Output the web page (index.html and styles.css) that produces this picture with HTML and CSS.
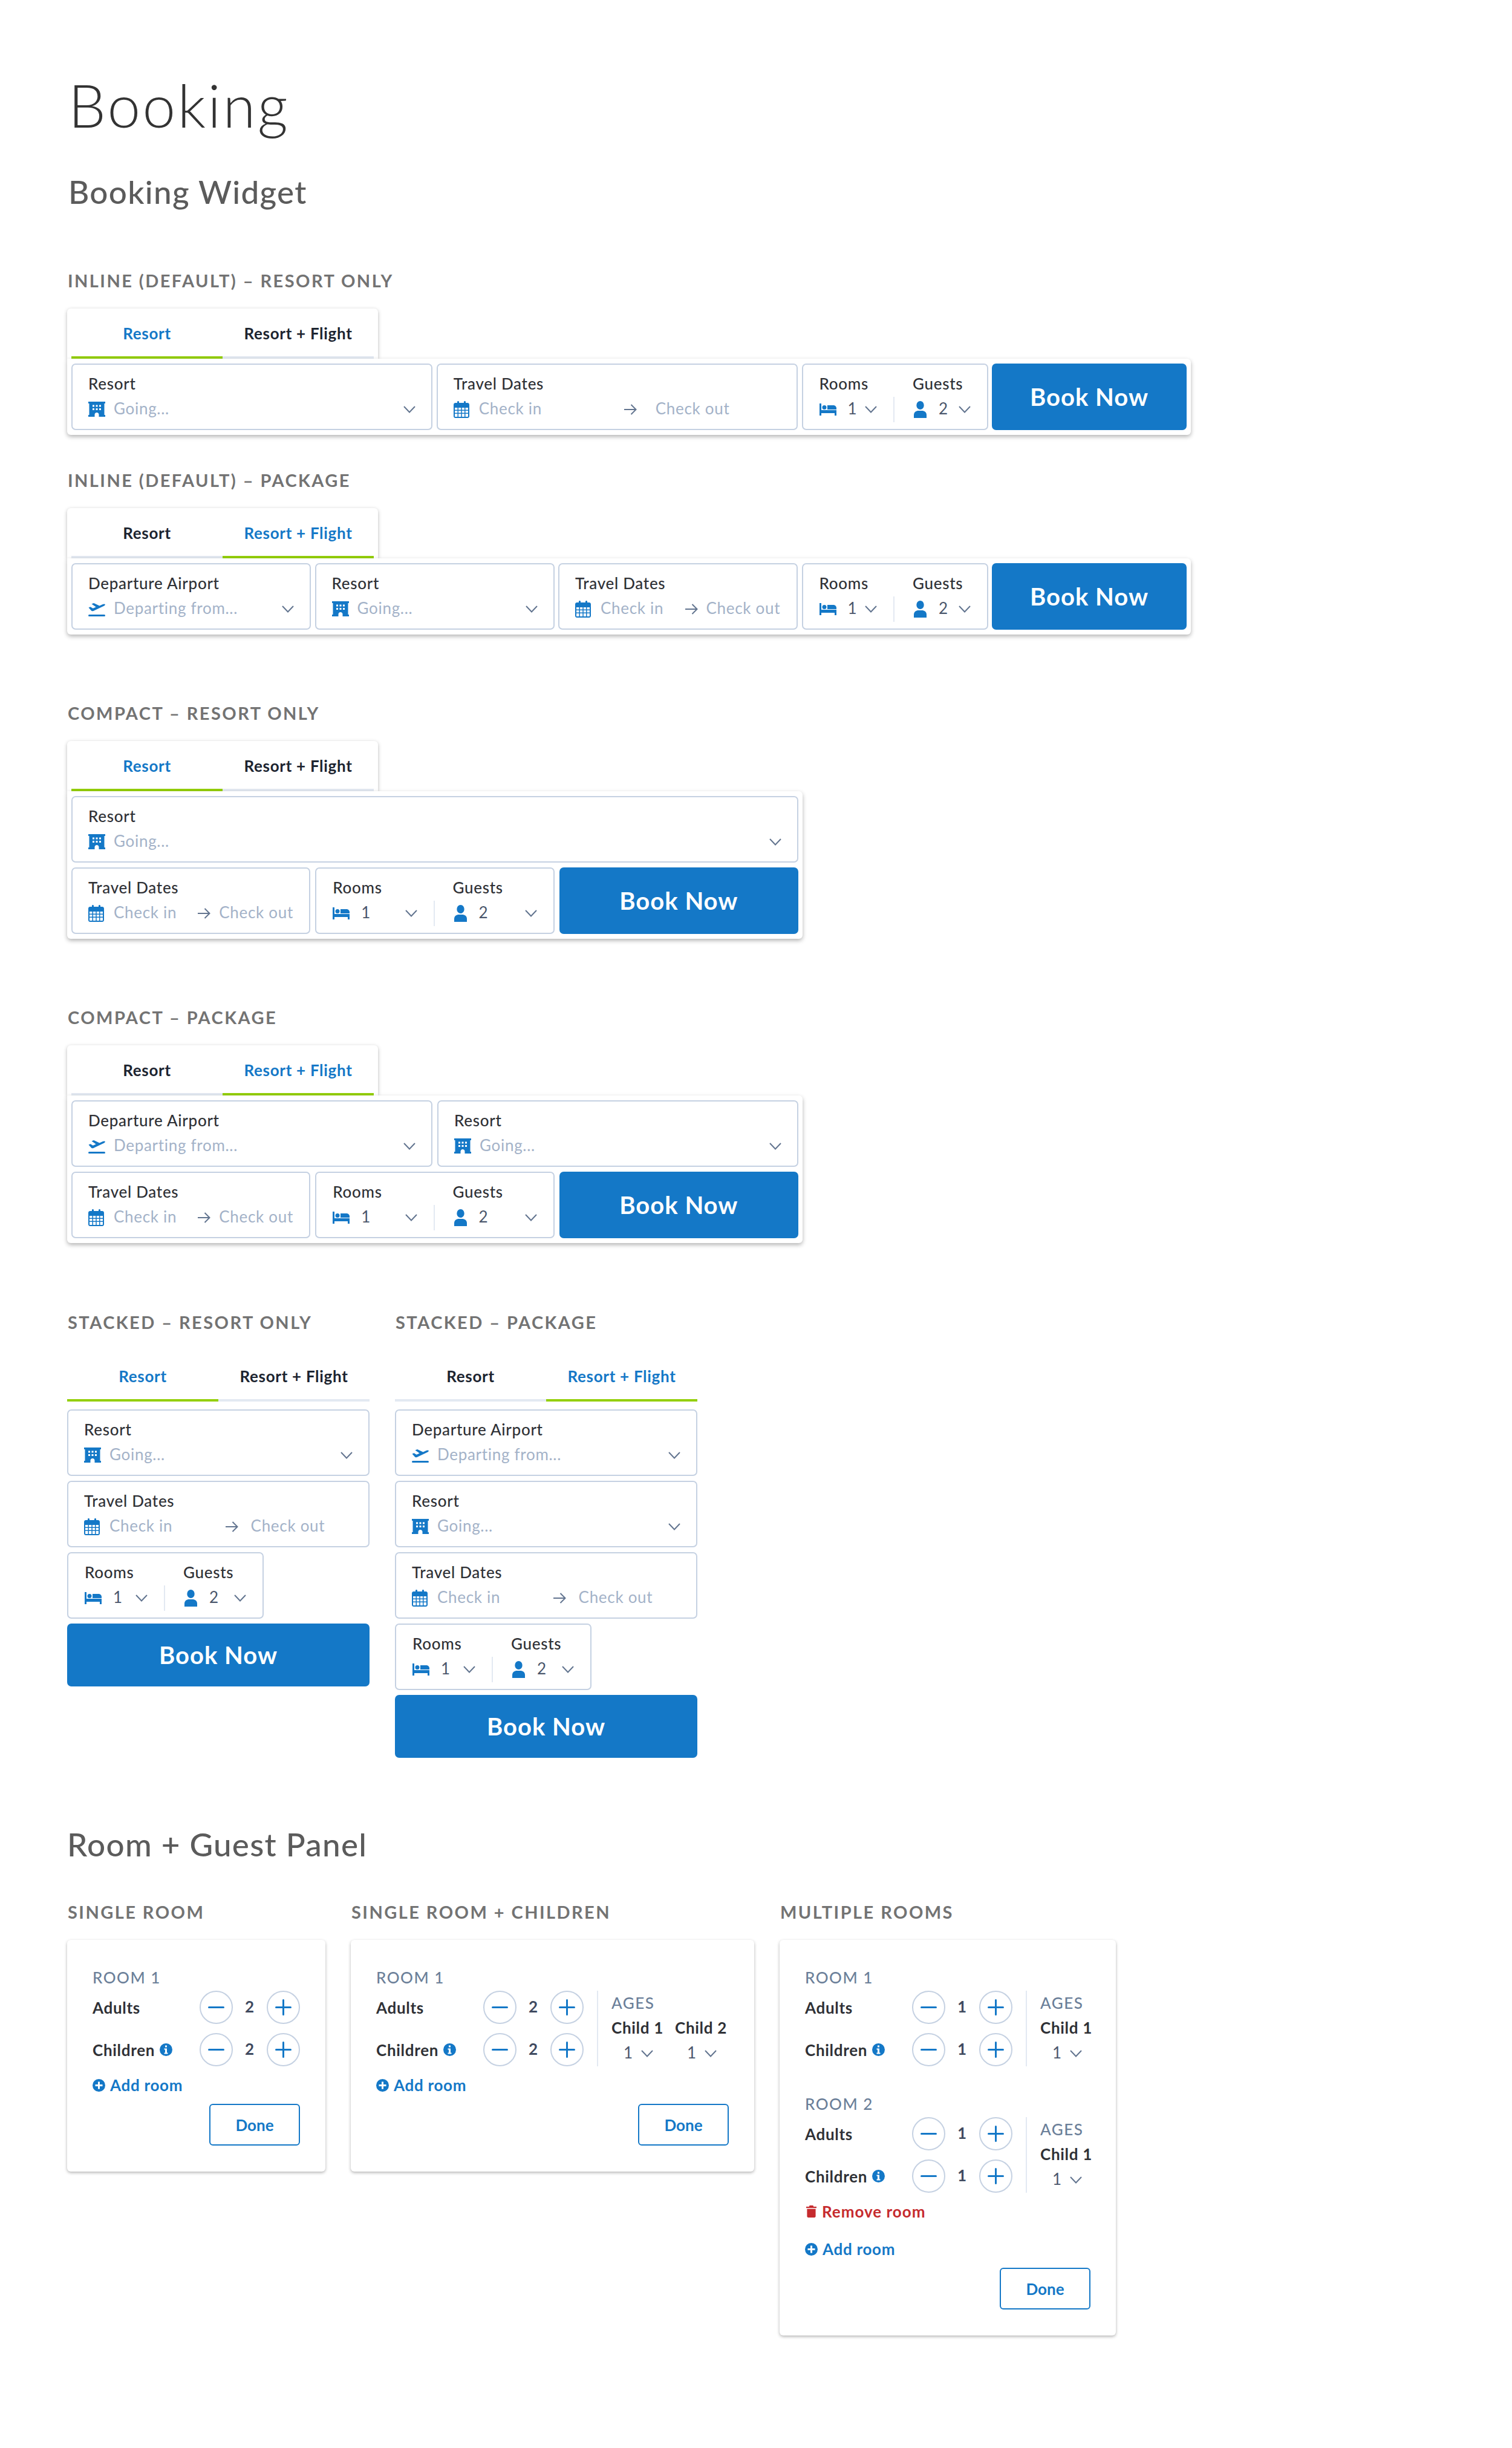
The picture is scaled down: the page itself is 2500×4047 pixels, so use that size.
FILE: index.html
```html
<!DOCTYPE html>
<html lang="en">
<head>
    <meta charset="UTF-8">
    <meta name="viewport" content="width=device-width, initial-scale=1.0">
    <title>Booking</title>
    <link rel="stylesheet" href="styles.css">
</head>
<body>

<!-- Icon sprite -->
<svg class="sprite" xmlns="http://www.w3.org/2000/svg">
    <symbol id="i-hotel" viewBox="0 0 28 28">
        <path fill-rule="evenodd" d="M0 1h28v3h-1.500v19H28v3H17.500v-3.500c0-2-1.500-3.500-3.500-3.500s-3.500 1.500-3.500 3.500V26H0v-3h1.500V4H0zM7 6.500v3h3v-3zM12.500 6.500v3h3v-3zM18 6.500v3h3v-3zM7 12v3h3v-3zM12.500 12v3h3v-3zM18 12v3h3v-3z"/>
    </symbol>
    <symbol id="i-cal" viewBox="0 0 28 28">
        <path fill-rule="evenodd" d="M3 3h3V1.500C6 .6 6.700 0 7.500 0S9 .6 9 1.500V3h8V1.500c0-.9.700-1.500 1.500-1.500S20 .6 20 1.500V3h3c1.600 0 3 1.300 3 3v19c0 1.700-1.400 3-3 3H3c-1.600 0-3-1.300-3-3V6c0-1.700 1.400-3 3-3zM2 11v3.500h4.500V11zM8 11v3.500h4.300V11zM13.800 11v3.500H18V11zM19.500 11v3.500H24V11zM2 16v3.500h4.500V16zM8 16v3.500h4.300V16zM13.800 16v3.500H18V16zM19.500 16v3.500H24V16zM2 21v4c0 .6.400 1 1 1h3.500v-5zM8 21v5h4.300v-5zM13.800 21v5H18v-5zM19.500 21v5H23c.6 0 1-.4 1-1v-4z"/>
    </symbol>
    <symbol id="i-bed" viewBox="0 0 28 28">
        <path d="M0 4h3v11h25v9h-3v-4H3v4H0z"/>
        <circle cx="8" cy="10.500" r="3.500"/>
        <path d="M13 7h10c2.800 0 5 2.200 5 5v2H13z"/>
    </symbol>
    <symbol id="i-person" viewBox="0 0 21 28">
        <ellipse cx="10.500" cy="7" rx="6.200" ry="7"/>
        <path d="M0 28v-5c0-4.400 3.600-7 8-7h5c4.400 0 8 2.600 8 7v5z"/>
    </symbol>
    <symbol id="i-plane" viewBox="0 0 28 28">
        <path d="M.5 11.500l3-1.300 4.200 2.600 5-2.300L5.500 5.600 9 4l9.500 4.500 5.500-2.600c1.500-.7 3.200-.7 3.700.2.400.9-.4 1.900-1.900 2.600L8.500 17c-1.200.5-2.300.4-3.300-.3z"/>
        <rect x="0" y="23" width="28" height="3" rx="1.500"/>
    </symbol>
    <symbol id="i-chev" viewBox="0 0 20 12">
        <path d="M1 1l9 9.500L19 1" fill="none" stroke="currentColor" stroke-width="2"/>
    </symbol>
    <symbol id="i-arrow" viewBox="0 0 21 20">
        <path d="M0 10h19.500M11.500 2l8 8-8 8" fill="none" stroke="currentColor" stroke-width="2"/>
    </symbol>
    <symbol id="i-minus" viewBox="0 0 27 27">
        <path d="M1.500 13.500h24" fill="none" stroke="currentColor" stroke-width="3" stroke-linecap="round"/>
    </symbol>
    <symbol id="i-plus" viewBox="0 0 27 27">
        <path d="M1.500 13.500h24M13.500 1.500v24" fill="none" stroke="currentColor" stroke-width="3" stroke-linecap="round"/>
    </symbol>
    <symbol id="i-info" viewBox="0 0 21 21">
        <path fill-rule="evenodd" d="M10.500 0a10.500 10.500 0 1 1 0 21 10.500 10.500 0 0 1 0-21zM9 3.500v3h3v-3zM7.500 8.500v2H9v5H7.500v2h6v-2H12v-7z"/>
    </symbol>
    <symbol id="i-add" viewBox="0 0 21 21">
        <path fill-rule="evenodd" d="M10.500 0a10.500 10.500 0 1 1 0 21 10.500 10.500 0 0 1 0-21zM9 4.500V9H4.500v3H9v4.500h3V12h4.500V9H12V4.500z"/>
    </symbol>
    <symbol id="i-trash" viewBox="0 0 18 21">
        <path d="M6 0h6l1 2h5v2.500H0V2h5zM1.500 6h15v13c0 1.100-.9 2-2 2h-11c-1.100 0-2-.9-2-2z"/>
    </symbol>
</svg>

<div class="page">
    <h1>Booking</h1>
    <h2 class="sub-title">Booking Widget</h2>

    <!-- Inline -->
    <h3 class="label first">INLINE (DEFAULT) – RESORT ONLY</h3>
    <div class="widget inline">
        <div class="tabs">
            <div class="tab active">Resort</div>
            <div class="tab">Resort + Flight</div>
        </div>
        <div class="body">
            <div class="row row-2">
                <div class="field">
                    <div class="field-label">Resort</div>
                    <div class="field-value"><svg class="ic"><use href="#i-hotel"/></svg><span class="ph">Going...</span><svg class="chev"><use href="#i-chev"/></svg></div>
                </div>
                <div class="field">
                    <div class="field-label">Travel Dates</div>
                    <div class="field-value dates">
                        <div class="date-in"><svg class="ic"><use href="#i-cal"/></svg><span class="ph">Check in</span></div>
                        <div class="date-out"><span class="arrow-box"><svg class="arrow"><use href="#i-arrow"/></svg></span><span class="ph">Check out</span></div>
                    </div>
                </div>
                <div class="field picks">
                    <div class="pick">
                        <div class="field-label">Rooms</div>
                        <div class="pick-row"><svg class="ic bed"><use href="#i-bed"/></svg><span class="num">1</span><svg class="chev"><use href="#i-chev"/></svg></div>
                    </div>
                    <div class="pick">
                        <div class="field-label">Guests</div>
                        <div class="pick-row"><svg class="person"><use href="#i-person"/></svg><span class="num">2</span><svg class="chev"><use href="#i-chev"/></svg></div>
                    </div>
                </div>
                <button class="book">Book Now</button>
            </div>
        </div>
    </div>

    <h3 class="label near">INLINE (DEFAULT) – PACKAGE</h3>
    <div class="widget inline">
        <div class="tabs">
            <div class="tab">Resort</div>
            <div class="tab active">Resort + Flight</div>
        </div>
        <div class="body">
            <div class="row row-3">
                <div class="field">
                    <div class="field-label">Departure Airport</div>
                    <div class="field-value"><svg class="ic"><use href="#i-plane"/></svg><span class="ph">Departing from...</span><svg class="chev"><use href="#i-chev"/></svg></div>
                </div>
                <div class="field">
                    <div class="field-label">Resort</div>
                    <div class="field-value"><svg class="ic"><use href="#i-hotel"/></svg><span class="ph">Going...</span><svg class="chev"><use href="#i-chev"/></svg></div>
                </div>
                <div class="field">
                    <div class="field-label">Travel Dates</div>
                    <div class="field-value dates">
                        <div class="date-in"><svg class="ic"><use href="#i-cal"/></svg><span class="ph">Check in</span></div>
                        <div class="date-out"><span class="arrow-box"><svg class="arrow"><use href="#i-arrow"/></svg></span><span class="ph">Check out</span></div>
                    </div>
                </div>
                <div class="field picks">
                    <div class="pick">
                        <div class="field-label">Rooms</div>
                        <div class="pick-row"><svg class="ic bed"><use href="#i-bed"/></svg><span class="num">1</span><svg class="chev"><use href="#i-chev"/></svg></div>
                    </div>
                    <div class="pick">
                        <div class="field-label">Guests</div>
                        <div class="pick-row"><svg class="person"><use href="#i-person"/></svg><span class="num">2</span><svg class="chev"><use href="#i-chev"/></svg></div>
                    </div>
                </div>
                <button class="book">Book Now</button>
            </div>
        </div>
    </div>

    <!-- Compact -->
    <h3 class="label">COMPACT – RESORT ONLY</h3>
    <div class="widget compact">
        <div class="tabs">
            <div class="tab active">Resort</div>
            <div class="tab">Resort + Flight</div>
        </div>
        <div class="body">
            <div class="row">
                <div class="field">
                    <div class="field-label">Resort</div>
                    <div class="field-value"><svg class="ic"><use href="#i-hotel"/></svg><span class="ph">Going...</span><svg class="chev"><use href="#i-chev"/></svg></div>
                </div>
            </div>
            <div class="row">
                <div class="field">
                    <div class="field-label">Travel Dates</div>
                    <div class="field-value dates">
                        <div class="date-in"><svg class="ic"><use href="#i-cal"/></svg><span class="ph">Check in</span></div>
                        <div class="date-out"><span class="arrow-box"><svg class="arrow"><use href="#i-arrow"/></svg></span><span class="ph">Check out</span></div>
                    </div>
                </div>
                <div class="field picks">
                    <div class="pick">
                        <div class="field-label">Rooms</div>
                        <div class="pick-row"><svg class="ic bed"><use href="#i-bed"/></svg><span class="num">1</span><svg class="chev"><use href="#i-chev"/></svg></div>
                    </div>
                    <div class="pick">
                        <div class="field-label">Guests</div>
                        <div class="pick-row"><svg class="person"><use href="#i-person"/></svg><span class="num">2</span><svg class="chev"><use href="#i-chev"/></svg></div>
                    </div>
                </div>
                <button class="book">Book Now</button>
            </div>
        </div>
    </div>

    <h3 class="label">COMPACT – PACKAGE</h3>
    <div class="widget compact">
        <div class="tabs">
            <div class="tab">Resort</div>
            <div class="tab active">Resort + Flight</div>
        </div>
        <div class="body">
            <div class="row">
                <div class="field">
                    <div class="field-label">Departure Airport</div>
                    <div class="field-value"><svg class="ic"><use href="#i-plane"/></svg><span class="ph">Departing from...</span><svg class="chev"><use href="#i-chev"/></svg></div>
                </div>
                <div class="field">
                    <div class="field-label">Resort</div>
                    <div class="field-value"><svg class="ic"><use href="#i-hotel"/></svg><span class="ph">Going...</span><svg class="chev"><use href="#i-chev"/></svg></div>
                </div>
            </div>
            <div class="row">
                <div class="field">
                    <div class="field-label">Travel Dates</div>
                    <div class="field-value dates">
                        <div class="date-in"><svg class="ic"><use href="#i-cal"/></svg><span class="ph">Check in</span></div>
                        <div class="date-out"><span class="arrow-box"><svg class="arrow"><use href="#i-arrow"/></svg></span><span class="ph">Check out</span></div>
                    </div>
                </div>
                <div class="field picks">
                    <div class="pick">
                        <div class="field-label">Rooms</div>
                        <div class="pick-row"><svg class="ic bed"><use href="#i-bed"/></svg><span class="num">1</span><svg class="chev"><use href="#i-chev"/></svg></div>
                    </div>
                    <div class="pick">
                        <div class="field-label">Guests</div>
                        <div class="pick-row"><svg class="person"><use href="#i-person"/></svg><span class="num">2</span><svg class="chev"><use href="#i-chev"/></svg></div>
                    </div>
                </div>
                <button class="book">Book Now</button>
            </div>
        </div>
    </div>

    <!-- Stacked -->
    <div class="stacked-cols">
        <div class="stacked-col">
            <h3 class="label flat">STACKED – RESORT ONLY</h3>
            <div class="widget stacked">
                <div class="tabs">
                    <div class="tab active">Resort</div>
                    <div class="tab">Resort + Flight</div>
                </div>
                <div class="body">
                    <div class="field">
                        <div class="field-label">Resort</div>
                        <div class="field-value"><svg class="ic"><use href="#i-hotel"/></svg><span class="ph">Going...</span><svg class="chev"><use href="#i-chev"/></svg></div>
                    </div>
                    <div class="field">
                        <div class="field-label">Travel Dates</div>
                        <div class="field-value dates">
                            <div class="date-in"><svg class="ic"><use href="#i-cal"/></svg><span class="ph">Check in</span></div>
                            <div class="date-out"><span class="arrow-box"><svg class="arrow"><use href="#i-arrow"/></svg></span><span class="ph">Check out</span></div>
                        </div>
                    </div>
                    <div class="field picks">
                        <div class="pick">
                            <div class="field-label">Rooms</div>
                            <div class="pick-row"><svg class="ic bed"><use href="#i-bed"/></svg><span class="num">1</span><svg class="chev"><use href="#i-chev"/></svg></div>
                        </div>
                        <div class="pick">
                            <div class="field-label">Guests</div>
                            <div class="pick-row"><svg class="person"><use href="#i-person"/></svg><span class="num">2</span><svg class="chev"><use href="#i-chev"/></svg></div>
                        </div>
                    </div>
                    <button class="book">Book Now</button>
                </div>
            </div>
        </div>
        <div class="stacked-col">
            <h3 class="label flat">STACKED – PACKAGE</h3>
            <div class="widget stacked">
                <div class="tabs">
                    <div class="tab">Resort</div>
                    <div class="tab active">Resort + Flight</div>
                </div>
                <div class="body">
                    <div class="field">
                        <div class="field-label">Departure Airport</div>
                        <div class="field-value"><svg class="ic"><use href="#i-plane"/></svg><span class="ph">Departing from...</span><svg class="chev"><use href="#i-chev"/></svg></div>
                    </div>
                    <div class="field">
                        <div class="field-label">Resort</div>
                        <div class="field-value"><svg class="ic"><use href="#i-hotel"/></svg><span class="ph">Going...</span><svg class="chev"><use href="#i-chev"/></svg></div>
                    </div>
                    <div class="field">
                        <div class="field-label">Travel Dates</div>
                        <div class="field-value dates">
                            <div class="date-in"><svg class="ic"><use href="#i-cal"/></svg><span class="ph">Check in</span></div>
                            <div class="date-out"><span class="arrow-box"><svg class="arrow"><use href="#i-arrow"/></svg></span><span class="ph">Check out</span></div>
                        </div>
                    </div>
                    <div class="field picks">
                        <div class="pick">
                            <div class="field-label">Rooms</div>
                            <div class="pick-row"><svg class="ic bed"><use href="#i-bed"/></svg><span class="num">1</span><svg class="chev"><use href="#i-chev"/></svg></div>
                        </div>
                        <div class="pick">
                            <div class="field-label">Guests</div>
                            <div class="pick-row"><svg class="person"><use href="#i-person"/></svg><span class="num">2</span><svg class="chev"><use href="#i-chev"/></svg></div>
                        </div>
                    </div>
                    <button class="book">Book Now</button>
                </div>
            </div>
        </div>
    </div>

    <!-- Room + Guest panel -->
    <h2 class="sub-title panel-title">Room + Guest Panel</h2>
    <div class="panels">
        <div class="panel-col">
            <h3 class="label flat">SINGLE ROOM</h3>
            <div class="panel w-single">
                <div class="room">
                    <div class="room-title">ROOM 1</div>
                    <div class="room-body">
                        <div class="counters">
                            <div class="counter">
                                <span class="counter-label">Adults</span>
                                <span class="circle"><svg class="sign"><use href="#i-minus"/></svg></span><span class="count">2</span><span class="circle"><svg class="sign"><use href="#i-plus"/></svg></span>
                            </div>
                            <div class="counter">
                                <span class="counter-label">Children <svg class="info"><use href="#i-info"/></svg></span>
                                <span class="circle"><svg class="sign"><use href="#i-minus"/></svg></span><span class="count">2</span><span class="circle"><svg class="sign"><use href="#i-plus"/></svg></span>
                            </div>
                        </div>
                    </div>
                </div>
                <div class="add-room"><svg class="info"><use href="#i-add"/></svg>Add room</div>
                <div class="panel-foot"><button class="done">Done</button></div>
            </div>
        </div>

        <div class="panel-col">
            <h3 class="label flat">SINGLE ROOM + CHILDREN</h3>
            <div class="panel w-children">
                <div class="room">
                    <div class="room-title">ROOM 1</div>
                    <div class="room-body">
                        <div class="counters">
                            <div class="counter">
                                <span class="counter-label">Adults</span>
                                <span class="circle"><svg class="sign"><use href="#i-minus"/></svg></span><span class="count">2</span><span class="circle"><svg class="sign"><use href="#i-plus"/></svg></span>
                            </div>
                            <div class="counter">
                                <span class="counter-label">Children <svg class="info"><use href="#i-info"/></svg></span>
                                <span class="circle"><svg class="sign"><use href="#i-minus"/></svg></span><span class="count">2</span><span class="circle"><svg class="sign"><use href="#i-plus"/></svg></span>
                            </div>
                        </div>
                        <div class="ages">
                            <div class="ages-title">AGES</div>
                            <div class="ages-row">
                                <div class="child">
                                    <div class="child-label">Child 1</div>
                                    <div class="child-value"><span class="num">1</span><svg class="chev"><use href="#i-chev"/></svg></div>
                                </div>
                                <div class="child">
                                    <div class="child-label">Child 2</div>
                                    <div class="child-value"><span class="num">1</span><svg class="chev"><use href="#i-chev"/></svg></div>
                                </div>
                            </div>
                        </div>
                    </div>
                </div>
                <div class="add-room"><svg class="info"><use href="#i-add"/></svg>Add room</div>
                <div class="panel-foot"><button class="done">Done</button></div>
            </div>
        </div>

        <div class="panel-col">
            <h3 class="label flat">MULTIPLE ROOMS</h3>
            <div class="panel w-multi">
                <div class="room">
                    <div class="room-title">ROOM 1</div>
                    <div class="room-body">
                        <div class="counters">
                            <div class="counter">
                                <span class="counter-label">Adults</span>
                                <span class="circle"><svg class="sign"><use href="#i-minus"/></svg></span><span class="count">1</span><span class="circle"><svg class="sign"><use href="#i-plus"/></svg></span>
                            </div>
                            <div class="counter">
                                <span class="counter-label">Children <svg class="info"><use href="#i-info"/></svg></span>
                                <span class="circle"><svg class="sign"><use href="#i-minus"/></svg></span><span class="count">1</span><span class="circle"><svg class="sign"><use href="#i-plus"/></svg></span>
                            </div>
                        </div>
                        <div class="ages">
                            <div class="ages-title">AGES</div>
                            <div class="ages-row">
                                <div class="child">
                                    <div class="child-label">Child 1</div>
                                    <div class="child-value"><span class="num">1</span><svg class="chev"><use href="#i-chev"/></svg></div>
                                </div>
                            </div>
                        </div>
                    </div>
                </div>
                <div class="room next">
                    <div class="room-title">ROOM 2</div>
                    <div class="room-body">
                        <div class="counters">
                            <div class="counter">
                                <span class="counter-label">Adults</span>
                                <span class="circle"><svg class="sign"><use href="#i-minus"/></svg></span><span class="count">1</span><span class="circle"><svg class="sign"><use href="#i-plus"/></svg></span>
                            </div>
                            <div class="counter">
                                <span class="counter-label">Children <svg class="info"><use href="#i-info"/></svg></span>
                                <span class="circle"><svg class="sign"><use href="#i-minus"/></svg></span><span class="count">1</span><span class="circle"><svg class="sign"><use href="#i-plus"/></svg></span>
                            </div>
                        </div>
                        <div class="ages">
                            <div class="ages-title">AGES</div>
                            <div class="ages-row">
                                <div class="child">
                                    <div class="child-label">Child 1</div>
                                    <div class="child-value"><span class="num">1</span><svg class="chev"><use href="#i-chev"/></svg></div>
                                </div>
                            </div>
                        </div>
                    </div>
                </div>
                <div class="remove-room"><svg class="trash"><use href="#i-trash"/></svg>Remove room</div>
                <div class="add-room far"><svg class="info"><use href="#i-add"/></svg>Add room</div>
                <div class="panel-foot"><button class="done">Done</button></div>
            </div>
        </div>
    </div>
</div>

</body>
</html>
```

FILE: styles.css
```css
* {
    box-sizing: border-box;
}

body {
    margin: 0;
    background: #fff;
    color: #2f3136;
    font-family: "Lato", "Liberation Sans", sans-serif;
    letter-spacing: 0.700px;
}

.sprite {
    display: none;
}

.page {
    height: 4047px;
    padding: 0 0 0 111px;
    overflow: hidden;
}

/* Headings */
h1 {
    margin: 0;
    padding: 115px 0 0 2px;
    font-size: 98px;
    line-height: 116px;
    font-weight: 300;
    letter-spacing: 3.300px;
    color: #333;
}

.sub-title {
    margin: 56px 0 0 2px;
    font-size: 53px;
    line-height: 60px;
    font-weight: 500;
    letter-spacing: 1.300px;
    color: #5b5b5b;
}

.panel-title {
    margin: 113px 0 0 0;
}

.label {
    margin: 112px 0 28px 1px;
    font-size: 29px;
    line-height: 36px;
    font-weight: 700;
    letter-spacing: 2.450px;
    color: #737373;
}

.label.first {
    margin-top: 99px;
}

.label.near {
    margin-top: 57px;
}

.label.flat {
    margin-top: 0;
}

/* Widget */
.widget {
    position: relative;
}

.tabs {
    position: relative;
    display: flex;
    width: 514px;
    height: 83px;
    padding: 0 7px;
    background: #fff;
    border-radius: 6px 6px 0 0;
    box-shadow: 0 2px 6px rgba(0, 0, 0, 0.28);
}

.tab {
    flex: 1;
    padding-top: 24px;
    border-bottom: 4px solid #e3e9f2;
    font-size: 26px;
    line-height: 34px;
    font-weight: 700;
    color: #1c2430;
    text-align: center;
}

.tab.active {
    border-bottom-color: #94cf0a;
    color: #1478c7;
}

.body {
    position: relative;
    display: flex;
    flex-direction: column;
    gap: 8px;
    padding: 8px 7px;
    background: #fff;
    border-radius: 0 6px 6px 6px;
    box-shadow: 0 3px 7px rgba(0, 0, 0, 0.3);
}

.inline {
    width: 1858px;
}

.compact {
    width: 1216px;
}

.row {
    display: grid;
    grid-auto-flow: column;
    grid-auto-columns: minmax(0, 1fr);
    gap: 8px;
}

.row-2 {
    grid-template-columns: repeat(2, minmax(0, 1fr)) 308px 322px;
    gap: 6.500px;
}

.row-3 {
    grid-template-columns: repeat(3, minmax(0, 1fr)) 308px 322px;
    gap: 6.500px;
}

.field {
    min-width: 0;
    height: 110px;
    padding: 16px 26px 0 26px;
    background: #fff;
    border: 2px solid #c5d1e2;
    border-radius: 7px;
}

.field-label {
    font-size: 26px;
    line-height: 30px;
    font-weight: 500;
    color: #2f3136;
}

.field-value {
    display: flex;
    align-items: center;
    height: 32px;
    margin-top: 12px;
    font-size: 26px;
}

.ic {
    flex: none;
    width: 28px;
    height: 28px;
    margin-right: 14px;
    color: #1478c7;
    fill: currentColor;
}

/* Text sits a little lower than the icons without this */
.ph,
.num {
    padding-bottom: 4px;
}

.ph {
    color: #a3b2c8;
    white-space: nowrap;
}

.chev {
    flex: none;
    width: 20px;
    height: 12px;
    margin-left: auto;
    color: #62748f;
}

.dates {
    gap: 0;
}

.date-in {
    display: flex;
    flex: 1;
    align-items: center;
    min-width: 0;
    padding-right: 23px;
}

.date-out {
    display: flex;
    flex: 1;
    align-items: center;
    min-width: 0;
}

.arrow-box {
    display: flex;
    flex: 0 0 20%;
    min-width: 35px;
}

.arrow {
    width: 21px;
    height: 20px;
    color: #62748f;
}

/* Rooms and guests */
.picks {
    display: flex;
    padding: 16px 0 0 0;
}

.pick {
    flex: 1;
    min-width: 0;
    padding: 0 29px 0 27px;
}

.pick + .pick {
    padding: 0 27px 0 30px;
}

.pick-row {
    display: flex;
    align-items: center;
    height: 42px;
    margin-top: 7px;
    margin-right: -29px;
    padding-right: 27px;
    border-right: 2px solid #e3e9f2;
    font-size: 26px;
}

.pick + .pick .pick-row {
    margin-right: 0;
    padding-right: 0;
    border-right: 0;
}

.bed {
    margin-right: 19px;
}

.person {
    flex: none;
    width: 21px;
    height: 28px;
    margin: 0 20px 0 2px;
    color: #1478c7;
    fill: currentColor;
}

.num {
    color: #4a566b;
}

.book {
    height: 110px;
    padding: 0;
    background: #1478c7;
    border: 0;
    border-radius: 7px;
    color: #fff;
    font-family: inherit;
    font-size: 40px;
    font-weight: 700;
    letter-spacing: 1px;
}

/* Stacked */
.stacked-cols {
    display: flex;
    gap: 42px;
    margin-top: 113px;
}

.stacked-col {
    width: 500px;
}

.stacked .tabs {
    width: 100%;
    height: 85px;
    padding: 0;
    box-shadow: none;
}

.stacked .tab {
    padding-top: 26px;
}

.stacked .body {
    gap: 8px;
    padding: 13px 0 0;
    box-shadow: none;
}

.stacked .picks {
    width: 325px;
}

.stacked .book {
    height: 104px;
}

/* Room + guest panel */
.panels {
    display: flex;
    align-items: flex-start;
    gap: 42px;
    margin-top: 64px;
}

.panel {
    padding: 47px 42px 43px;
    background: #fff;
    border-radius: 6px;
    box-shadow: 0 2px 5px rgba(0, 0, 0, 0.3);
}

.w-single {
    width: 427px;
}

.w-children {
    width: 667px;
}

.w-multi {
    width: 556px;
}

.room.next {
    margin-top: 47px;
}

.room-title {
    font-size: 26px;
    line-height: 30px;
    font-weight: 500;
    letter-spacing: 1.500px;
    color: #6b7f99;
}

.room-body {
    display: flex;
    margin-top: 7px;
}

.counters {
    display: flex;
    flex-direction: column;
    gap: 15px;
}

.counter {
    display: flex;
    align-items: center;
}

.counter-label {
    display: flex;
    align-items: center;
    gap: 8px;
    width: 177px;
    font-size: 26px;
    font-weight: 700;
    color: #2f3136;
}

.circle {
    display: flex;
    align-items: center;
    justify-content: center;
    width: 55px;
    height: 55px;
    border: 2px solid #c5d1e2;
    border-radius: 50%;
}

.sign {
    width: 27px;
    height: 27px;
    color: #1478c7;
}

.count {
    width: 56px;
    padding-bottom: 3px;
    font-size: 26px;
    font-weight: 700;
    color: #3f4a5f;
    text-align: center;
}

.info {
    flex: none;
    width: 21px;
    height: 21px;
    color: #1478c7;
    fill: currentColor;
}

.ages {
    margin-left: 22px;
    padding-left: 22px;
    border-left: 2px solid #e3e9f2;
}

.ages-title {
    margin-top: 5px;
    font-size: 26px;
    line-height: 30px;
    font-weight: 500;
    letter-spacing: 1.500px;
    color: #6b7f99;
}

.ages-row {
    display: flex;
    gap: 23px;
    margin-top: 11px;
}

.child {
    width: 82px;
}

.child-label {
    font-size: 26px;
    line-height: 30px;
    font-weight: 700;
    white-space: nowrap;
}

.child-value {
    display: flex;
    align-items: center;
    height: 30px;
    margin-top: 13px;
    padding: 0 13px 0 20px;
    font-size: 26px;
}

.add-room,
.remove-room {
    display: flex;
    align-items: center;
    gap: 8px;
    margin-top: 16px;
    font-size: 26px;
    line-height: 30px;
    font-weight: 700;
    color: #1478c7;
}

.add-room.far {
    margin-top: 32px;
}

.remove-room {
    gap: 9px;
    padding-left: 2px;
    letter-spacing: 1px;
    color: #c62b2e;
}

.trash {
    width: 17px;
    height: 20px;
    fill: currentColor;
}

.panel-foot {
    display: flex;
    justify-content: flex-end;
    margin-top: 16px;
}

.done {
    width: 150px;
    height: 69px;
    padding: 0;
    background: #fff;
    border: 2px solid #1478c7;
    border-radius: 6px;
    color: #1478c7;
    font-family: inherit;
    font-size: 26px;
    font-weight: 700;
}
```
